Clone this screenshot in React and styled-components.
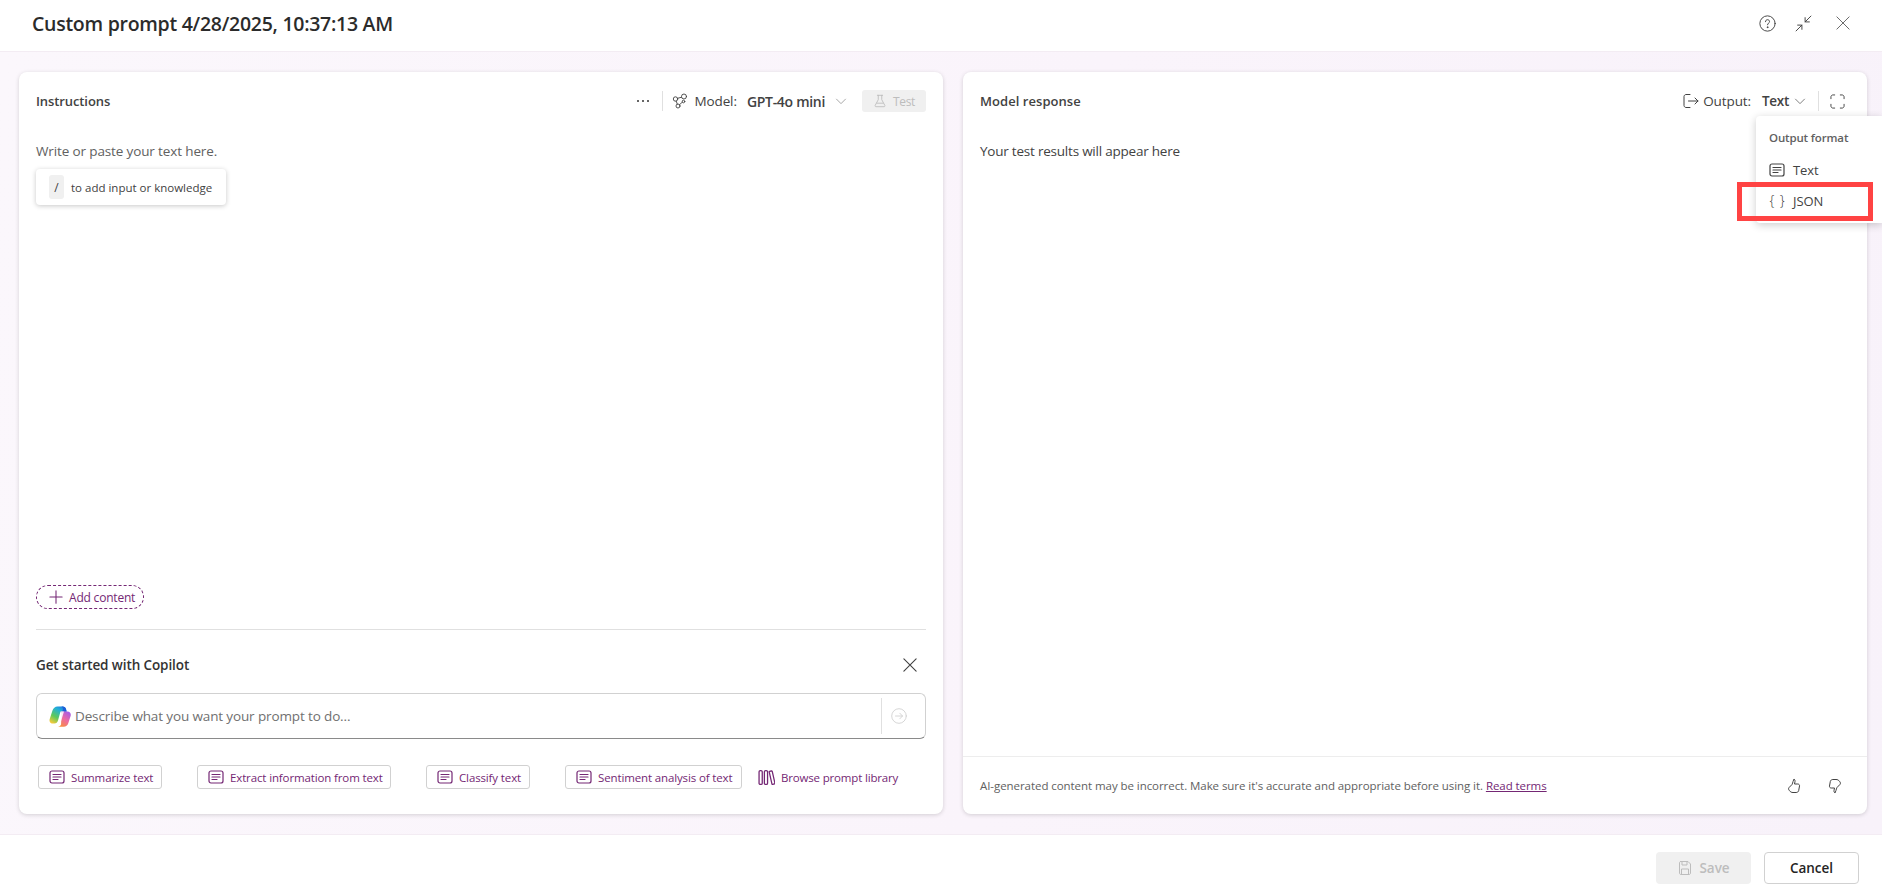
import React from 'react';
import styled, { createGlobalStyle } from 'styled-components';

const purple = '#742774';

const GlobalStyle = createGlobalStyle`
  html, body, #root {
    margin: 0;
    height: 100%;
  }
  body {
    font-family: 'Open Sans', 'Noto Sans', 'Liberation Sans', sans-serif;
    color: #242424;
    background: #fff;
    overflow: hidden;
  }
`;

const Icon = ({ size = 16, children, ...rest }) => (
  <svg
    width={size}
    height={size}
    viewBox="0 0 16 16"
    fill="none"
    stroke="currentColor"
    strokeWidth="1"
    strokeLinecap="round"
    strokeLinejoin="round"
    {...rest}
  >
    {children}
  </svg>
);

const Chevron = () => (
  <Icon size={12}>
    <path d="M2 5.5l6 6 6-6" />
  </Icon>
);

const DocIcon = ({ size = 16 }) => (
  <Icon size={size} strokeWidth="1.2">
    <rect x="1" y="2" width="14" height="12" rx="2" />
    <path d="M4 5.5h8M4 8h8M4 10.5h5" />
  </Icon>
);

const CopilotIcon = () => (
  <svg width="22" height="22" viewBox="0 0 22 22">
    <defs>
      <linearGradient id="cpA" x1="0.2" y1="1" x2="0.8" y2="0">
        <stop offset="0" stopColor="#f5c93a" />
        <stop offset="0.35" stopColor="#5fc95a" />
        <stop offset="0.75" stopColor="#22b0d8" />
        <stop offset="1" stopColor="#1f78e0" />
      </linearGradient>
      <linearGradient id="cpB" x1="0.2" y1="1" x2="0.8" y2="0">
        <stop offset="0" stopColor="#f8913a" />
        <stop offset="0.5" stopColor="#ee6aa0" />
        <stop offset="1" stopColor="#a45be8" />
      </linearGradient>
    </defs>
    <path d="M8.500 1.500h5c1.800 0 3 1 3.500 2.800l.5 2.200h-6L9 15.500c-.5 1.700-1.800 3-3.500 3H3.800C1.300 18.500 0 16.400.7 14l2.700-8.200C4.300 3.100 6 1.500 8.500 1.500z" fill="url(#cpA)" />
    <path d="M12 1.500h1.800c1.700 0 2.800 1 3.300 2.800l.6 2.400H13.300l.6-2.200c.3-1.500-.5-3-1.900-3z" fill="#1b5fd6" />
    <path d="M12.500 6.500h6c2.500 0 3.800 2 3.100 4.500l-2.300 7.300c-.7 2.300-2.300 3.400-4.600 3.400H8.800c1.600 0 2.800-1 3.400-2.800L12 18.500l.1-.3z" fill="url(#cpB)" />
    <path d="M12.600 6.500l-3 9.500c-.4 1.300-.9 2-1.600 2.500h2.200c.9-.4 1.500-1.200 1.900-2.500l2.900-9.500z" fill="#fff" opacity="0.85" />
  </svg>
);

const App = () => (
  <Page>
    <GlobalStyle />
    <Header>
      <Title>Custom prompt 4/28/2025, 10:37:13 AM</Title>
      <HeaderActions>
        <Icon size={17} strokeWidth="0.9">
          <circle cx="8" cy="8" r="7.200" />
          <path d="M6.100 6.300c0-1.200.9-1.900 1.900-1.900s1.900.7 1.900 1.800c0 1.500-1.900 1.500-1.900 3" />
          <circle cx="8" cy="11.500" r="0.400" fill="currentColor" />
        </Icon>
        <Icon size={17} strokeWidth="0.9">
          <path d="M15 1L9.500 6.500M9.500 2.500v4h4M1 15l5.500-5.500M2.500 9.500h4v4" />
        </Icon>
        <Icon size={14} strokeWidth="0.9">
          <path d="M1 1l14 14M15 1L1 15" />
        </Icon>
      </HeaderActions>
    </Header>

    <Main>
      <Card>
        <CardHeader>
          <CardTitle>Instructions</CardTitle>
          <Toolbar>
            <Dots>
              <span />
              <span />
              <span />
            </Dots>
            <Divider />
            <Icon size={16} strokeWidth="0.9">
              <circle cx="3.500" cy="6" r="2.200" />
              <circle cx="12" cy="3.500" r="2.500" />
              <circle cx="6" cy="13" r="2" />
              <path d="M5.600 5.300L9.600 4.200M4.200 8.100l1.100 3M7.500 11.700L10.500 9" />
              <circle cx="11.500" cy="8.500" r="1.300" />
            </Icon>
            <FieldLabel>Model:</FieldLabel>
            <FieldValue $wide>GPT-4o mini</FieldValue>
            <ChevronWrap $muted>
              <Chevron />
            </ChevronWrap>
            <TestButton disabled>
              <Icon size={14} strokeWidth="1">
                <path d="M5 1.500h6M6 1.500v5L2.500 13c-.4.8 0 1.500.9 1.500h9.200c.9 0 1.300-.7.900-1.500L10 6.500v-5M4.500 10.500h7" />
              </Icon>
              Test
            </TestButton>
          </Toolbar>
        </CardHeader>

        <Editor>
          <Placeholder>Write or paste your text here.</Placeholder>
          <Hint>
            <Kbd>/</Kbd>
            to add input or knowledge
          </Hint>
        </Editor>

        <AddContent>
          <Icon size={14} strokeWidth="1.200">
            <path d="M8 1v14M1 8h14" />
          </Icon>
          Add content
        </AddContent>

        <Separator />

        <CopilotHeader>
          <CopilotTitle>Get started with Copilot</CopilotTitle>
          <CloseButton>
            <Icon size={14} strokeWidth="1.300">
              <path d="M1 1l14 14M15 1L1 15" />
            </Icon>
          </CloseButton>
        </CopilotHeader>

        <PromptBox>
          <CopilotIcon />
          <PromptText>Describe what you want your prompt to do...</PromptText>
          <SendArea>
            <Icon size={16} strokeWidth="0.9">
              <circle cx="8" cy="8" r="7.300" />
              <path d="M4.500 8h7M8.800 5.200L11.500 8l-2.700 2.800" />
            </Icon>
          </SendArea>
        </PromptBox>

        <Suggestions>
          <Suggestion $width={124} $mr={35}>
            <DocIcon />
            Summarize text
          </Suggestion>
          <Suggestion $width={194} $mr={35}>
            <DocIcon />
            Extract information from text
          </Suggestion>
          <Suggestion $width={104} $mr={35}>
            <DocIcon />
            Classify text
          </Suggestion>
          <Suggestion $width={177} $mr={16}>
            <DocIcon />
            Sentiment analysis of text
          </Suggestion>
          <LibraryLink>
            <Icon size={17} strokeWidth="1.200">
              <rect x="1" y="1.500" width="3" height="13" rx="1.200" />
              <rect x="6" y="1.500" width="3" height="13" rx="1.200" />
              <path d="M10.500 2.500l2-.7c.4-.1.700 0 .9.500l2.500 11c.1.400-.1.700-.5.800l-1.500.4c-.4.100-.7-.1-.8-.5z" />
            </Icon>
            Browse prompt library
          </LibraryLink>
        </Suggestions>
      </Card>

      <Card>
        <CardHeader $right>
          <CardTitle $loose>Model response</CardTitle>
          <Toolbar>
            <Icon size={16} strokeWidth="1">
              <path d="M7 1.500H3c-1 0-2 1-2 2v9c0 1 1 2 2 2h4M5.500 8h9.500M12 5l3 3-3 3" />
            </Icon>
            <FieldLabel $tight>Output:</FieldLabel>
            <FieldValue>Text</FieldValue>
            <ChevronWrap $tight>
              <Chevron />
            </ChevronWrap>
            <Divider $spaced />
            <Icon size={15} strokeWidth="1">
              <path d="M1 5V3c0-1 1-2 2-2h2M11 1h2c1 0 2 1 2 2v2M15 11v2c0 1-1 2-2 2h-2M5 15H3c-1 0-2-1-2-2v-2" />
            </Icon>
          </Toolbar>
        </CardHeader>

        <ResponseBody>Your test results will appear here</ResponseBody>

        <ResponseFooter>
          <Disclaimer>
            AI-generated content may be incorrect. Make sure it's accurate and appropriate before using it.{' '}
            <TermsLink href="#">Read terms</TermsLink>
          </Disclaimer>
          <FeedbackIcons>
            <Icon size={16} strokeWidth="1">
              <path d="M8 1.500C8.900 1.500 9.200 2.300 9 3.500L8.500 6h3.300c1.200 0 1.900 1 1.700 2l-.8 4.500c-.3 1.300-1.300 2-2.500 2H7c-1.500 0-2.500-.5-3.500-1.800-1-1.200-1.300-2.200-.4-3.200L6 6.500C7 5 7 1.500 8 1.500z" />
            </Icon>
            <Icon size={16} strokeWidth="1">
              <path d="M8 14.500c-.9 0-1.200-.8-1-2l.5-2.500H4.200c-1.200 0-1.900-1-1.700-2l.8-4.500C3.600 2.200 4.600 1.500 5.800 1.500H9c1.500 0 2.500.5 3.500 1.800 1 1.200 1.300 2.200.4 3.200L10 9.500C9 11 9 14.500 8 14.500z" />
            </Icon>
          </FeedbackIcons>
        </ResponseFooter>

        <OutputMenu>
          <MenuHeading>Output format</MenuHeading>
          <MenuItem>
            <DocIcon />
            Text
          </MenuItem>
          <MenuItem>
            <Braces>{'{ }'}</Braces>
            JSON
          </MenuItem>
        </OutputMenu>
      </Card>
      <Highlight />
    </Main>

    <Footer>
      <SaveButton disabled>
        <Icon size={16} strokeWidth="1">
          <path d="M3.500 1.500h7.500L13.500 4v9c0 .9-.6 1.500-1.500 1.500H4c-.9 0-1.500-.6-1.500-1.500V3c0-.9.500-1.500 1-1.500zM5 1.500v3.500h5V1.500M4.500 14.500V9h7v5.500" />
        </Icon>
        Save
      </SaveButton>
      <CancelButton>Cancel</CancelButton>
    </Footer>
  </Page>
);

const Page = styled.div`
  height: 100vh;
  display: flex;
  flex-direction: column;
`;

const Header = styled.header`
  flex: 0 0 52px;
  box-sizing: border-box;
  display: flex;
  align-items: center;
  justify-content: space-between;
  padding: 0 32px 5px 32px;
  border-bottom: 1px solid #f3ecf3;
`;

const Title = styled.h1`
  margin: 0;
  font-size: 19.500px;
  font-weight: 600;
  letter-spacing: -0.27px;
  color: #2b2b2b;
`;

const HeaderActions = styled.div`
  display: flex;
  align-items: center;
  gap: 19px;
  color: #424242;
  svg:last-child {
    margin-left: 5px;
  }
`;

const Main = styled.main`
  flex: 1;
  position: relative;
  display: grid;
  grid-template-columns: 924px 904px;
  gap: 20px;
  padding: 20px 15px 20px 19px;
  min-height: 0;
  background: linear-gradient(100deg, #fbf7fc 0%, #faf4fb 55%, #f8f2fa 100%);
`;

const Card = styled.section`
  position: relative;
  display: flex;
  flex-direction: column;
  box-sizing: border-box;
  min-height: 0;
  background: #fff;
  border-radius: 8px;
  box-shadow: 0 1px 4px rgba(0, 0, 0, 0.16);
`;

const CardHeader = styled.div`
  flex: 0 0 58px;
  box-sizing: border-box;
  display: flex;
  align-items: center;
  justify-content: space-between;
  padding: 0 ${(p) => (p.$right ? '22px' : '17px')} 0 17px;
`;

const CardTitle = styled.h2`
  margin: 0;
  font-size: 13px;
  font-weight: 600;
  letter-spacing: ${(p) => (p.$loose ? '0.05px' : '-0.1px')};
  color: #424242;
`;

const Toolbar = styled.div`
  display: flex;
  align-items: center;
  color: #424242;
  font-size: 14px;
`;

const Dots = styled.div`
  display: flex;
  gap: 2.5px;
  margin-right: 13px;
  span {
    width: 2.5px;
    height: 2.5px;
    border-radius: 50%;
    background: #333;
  }
`;

const Divider = styled.div`
  width: 1px;
  height: 20px;
  background: #e0e0e0;
  margin: ${(p) => (p.$spaced ? '0 11px 0 12px' : '0 9px 0 0')};
`;

const FieldLabel = styled.span`
  margin-left: ${(p) => (p.$tight ? '4px' : '6px')};
  font-size: 13.500px;
  letter-spacing: -0.1px;
  color: #424242;
`;

const FieldValue = styled.span`
  margin-left: ${(p) => (p.$wide ? '10px' : '11px')};
  font-size: ${(p) => (p.$wide ? '14px' : '13.5px')};
  font-weight: 600;
  letter-spacing: -0.3px;
  color: #424242;
`;

const ChevronWrap = styled.span`
  display: flex;
  margin-left: ${(p) => (p.$tight ? '5px' : '10px')};
  color: ${(p) => (p.$muted ? '#8a8a8a' : '#555')};
`;

const TestButton = styled.button`
  display: flex;
  align-items: center;
  justify-content: center;
  gap: 6px;
  width: 64px;
  height: 22px;
  margin-left: 15px;
  padding: 0;
  border: none;
  border-radius: 3px;
  background: #f0f0f0;
  color: #bdbdbd;
  font: inherit;
  font-size: 12px;
  letter-spacing: -0.3px;
`;

const Editor = styled.div`
  flex: 1;
  padding: 0 17px;
`;

const Placeholder = styled.p`
  margin: 11px 0 0;
  font-size: 13.500px;
  line-height: 20px;
  letter-spacing: -0.13px;
  color: #616161;
`;

const Hint = styled.div`
  display: inline-flex;
  align-items: center;
  width: 190px;
  height: 36px;
  box-sizing: border-box;
  margin-top: 8px;
  padding-left: 13px;
  border-radius: 4px;
  box-shadow: 0 1px 5px rgba(0, 0, 0, 0.22);
  font-size: 11.500px;
  letter-spacing: 0;
  color: #424242;
`;

const Kbd = styled.span`
  display: flex;
  align-items: center;
  justify-content: center;
  width: 15px;
  height: 24px;
  margin-right: 7px;
  border-radius: 3px;
  background: #f0f0f0;
  font-size: 12px;
`;

const AddContent = styled.button`
  align-self: flex-start;
  display: flex;
  align-items: center;
  gap: 6px;
  box-sizing: border-box;
  width: 108px;
  height: 24px;
  margin: 0 0 20px 17px;
  padding: 0 0 0 12px;
  border: 1px dashed ${purple};
  border-radius: 12px;
  background: #fff;
  color: ${purple};
  font: inherit;
  font-size: 12px;
  letter-spacing: -0.2px;
`;

const Separator = styled.div`
  height: 1px;
  margin: 0 17px;
  background: #e0e0e0;
`;

const CopilotHeader = styled.div`
  display: flex;
  align-items: center;
  justify-content: space-between;
  height: 28px;
  margin: 21px 17px 14px;
`;

const CopilotTitle = styled.h3`
  margin: 0;
  font-size: 13.500px;
  font-weight: 600;
  letter-spacing: -0.1px;
  color: #333;
`;

const CloseButton = styled.span`
  display: flex;
  margin-right: 9px;
  color: #424242;
`;

const PromptBox = styled.div`
  display: flex;
  align-items: center;
  box-sizing: border-box;
  height: 46px;
  margin: 0 17px;
  padding-left: 12px;
  border: 1px solid #d1d1d1;
  border-bottom-color: #8a8a8a;
  border-radius: 6px;
`;

const PromptText = styled.span`
  flex: 1;
  margin-left: 4px;
  font-size: 13.500px;
  letter-spacing: -0.13px;
  color: #707070;
`;

const SendArea = styled.div`
  display: flex;
  align-items: center;
  height: 36px;
  padding: 0 18px 0 9px;
  border-left: 1px solid #e0e0e0;
  color: #d1d1d1;
`;

const Suggestions = styled.div`
  display: flex;
  align-items: center;
  margin: 26px 0 25px 19px;
`;

const Suggestion = styled.button`
  display: flex;
  align-items: center;
  gap: 6px;
  box-sizing: border-box;
  width: ${(p) => p.$width}px;
  height: 24px;
  margin-right: ${(p) => p.$mr}px;
  padding: 0 0 0 10px;
  border: 1px solid #d1d1d1;
  border-radius: 3px;
  background: #fff;
  color: ${purple};
  font: inherit;
  font-size: 11.500px;
  letter-spacing: -0.13px;
  white-space: nowrap;
`;

const LibraryLink = styled.span`
  display: flex;
  align-items: center;
  gap: 6px;
  color: ${purple};
  font-size: 11.500px;
  letter-spacing: -0.17px;
  white-space: nowrap;
`;

const ResponseBody = styled.div`
  flex: 1;
  padding: 11px 17px 0;
  font-size: 13.500px;
  line-height: 20px;
  letter-spacing: -0.22px;
  color: #424242;
`;

const ResponseFooter = styled.div`
  flex: 0 0 58px;
  box-sizing: border-box;
  display: flex;
  align-items: center;
  justify-content: space-between;
  padding: 0 24px 0 17px;
  border-top: 1px solid #ededed;
`;

const Disclaimer = styled.span`
  font-size: 11.500px;
  letter-spacing: -0.06px;
  color: #616161;
`;

const TermsLink = styled.a`
  color: ${purple};
  text-decoration: underline;
`;

const FeedbackIcons = styled.div`
  display: flex;
  gap: 25px;
  color: #424242;
`;

const OutputMenu = styled.div`
  position: absolute;
  top: 44px;
  right: -15px;
  width: 126px;
  height: 107px;
  box-sizing: border-box;
  padding: 10px 0 0 13px;
  background: #fff;
  border-radius: 4px 0 0 4px;
  box-shadow: 0 2px 8px rgba(0, 0, 0, 0.2);
`;

const MenuHeading = styled.div`
  height: 22px;
  display: flex;
  align-items: center;
  font-size: 11.500px;
  font-weight: 600;
  letter-spacing: -0.15px;
  color: #616161;
`;

const MenuItem = styled.div`
  display: flex;
  align-items: center;
  gap: 8px;
  height: 31px;
  font-size: 13px;
  letter-spacing: -0.1px;
  color: #424242;
  &:nth-child(2) {
    margin-top: 6px;
  }
`;

const Braces = styled.span`
  width: 16px;
  text-align: center;
  font-size: 14px;
  font-weight: 300;
  word-spacing: 2px;
  white-space: nowrap;
`;

const Highlight = styled.div`
  position: absolute;
  top: 130px;
  right: 9px;
  width: 136px;
  height: 39px;
  box-sizing: border-box;
  border: 5px solid #ff4343;
`;

const Footer = styled.footer`
  flex: 0 0 59px;
  box-sizing: border-box;
  display: flex;
  align-items: center;
  justify-content: flex-end;
  gap: 13px;
  padding: 7px 23px 0 0;
  border-top: 1px solid #f3ecf3;
`;

const SaveButton = styled.button`
  display: flex;
  align-items: center;
  justify-content: center;
  gap: 6px;
  width: 95px;
  height: 32px;
  padding: 0;
  border: none;
  border-radius: 4px;
  background: #f0f0f0;
  color: #bdbdbd;
  font: inherit;
  font-size: 13.500px;
  font-weight: 600;
`;

const CancelButton = styled.button`
  width: 95px;
  height: 32px;
  padding: 0;
  border: 1px solid #d1d1d1;
  border-radius: 4px;
  background: #fff;
  color: #242424;
  font: inherit;
  font-size: 13.500px;
  font-weight: 600;
`;

export default App;
